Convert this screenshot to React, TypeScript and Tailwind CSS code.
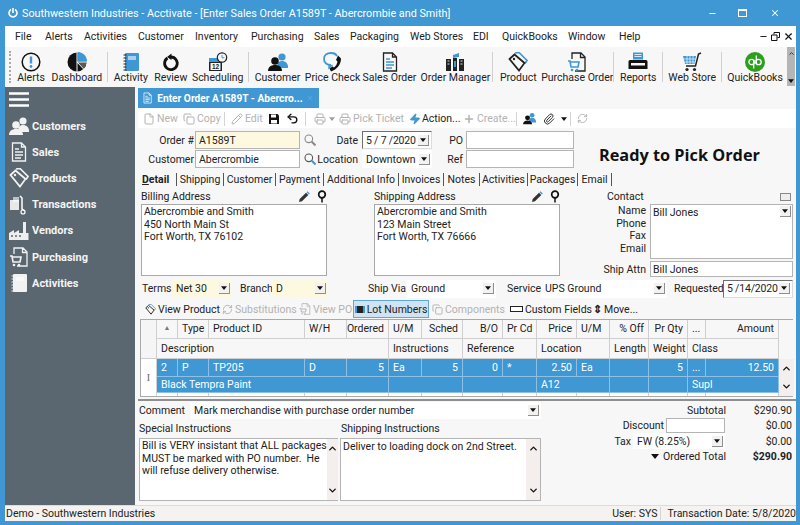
import React from 'react'
import { ChevronDown, ChevronUp, Copy, File, Minus, Paperclip, Pencil, Plus, Printer, RefreshCw, Undo2, X, Zap } from 'lucide-react'

const BLUE = '#3f97d3'

/* ---------- drawn icons ---------- */
type IconProps = { c?: string; a?: string; className?: string }

const People = ({ c = '#111', a = BLUE, className = 'w-5 h-5' }: IconProps) => (
  <svg viewBox="0 0 20 20" className={className}>
    <circle cx="14" cy="5" r="3.6" fill={a} />
    <path d="M9 15c0-4 2-6 5-6s6 2 6 6v1H9z" fill={a} />
    <circle cx="7" cy="9" r="3.8" fill={c} />
    <path d="M0 19c0-4 3-6 7-6s7 2 7 6z" fill={c} />
  </svg>
)
const Doc = ({ c = '#222', a = BLUE, className = 'w-5 h-5' }: IconProps) => (
  <svg viewBox="0 0 20 20" className={className} fill="none">
    <path d="M3.5 1h9l4 4v14h-13z M12.5 1v4h4" stroke={c} strokeWidth="1.3" />
    <path d="M6 7h4M6 10h8M6 13h8M6 16h6" stroke={a} strokeWidth="1.4" />
  </svg>
)
const Tag = ({ c = '#222', a = BLUE, className = 'w-5 h-5' }: IconProps) => (
  <svg viewBox="0 0 20 20" className={className} fill="none">
    <path d="M7 1l4-0.5 8 8-2 3" stroke={a} strokeWidth="1.6" />
    <path d="M1.5 7l5-4.500 10 8.500-5.500 7.500z" stroke={c} strokeWidth="1.7" />
    <circle cx="6" cy="7" r="1.2" fill={c} />
  </svg>
)
const Notebook = ({ c = BLUE, a = '#222', className = 'w-5 h-5' }: IconProps) => (
  <svg viewBox="0 0 20 20" className={className}>
    <rect x="4" y="1" width="14" height="18" rx="1" fill={c} />
    <rect x="7" y="4" width="8" height="4" fill="#fff" fillOpacity=".55" />
    <path d="M2.5 3h3M2.5 6h3M2.5 9h3M2.5 12h3M2.5 15h3M2.5 18h3" stroke={a} strokeWidth="1.2" />
  </svg>
)
const PoDoc = ({ c = '#222', a = BLUE, className = 'w-5 h-5' }: IconProps) => (
  <svg viewBox="0 0 20 20" className={className} fill="none">
    <path d="M5 7V1h9l4 4v14H8 M13.5 1v4.5H18" stroke={c} strokeWidth="1.3" />
    <path d="M1 9h2l1 6h7l1-5H3.5" stroke={a} strokeWidth="1.6" />
    <circle cx="5" cy="18" r="1.3" fill={a} />
    <circle cx="10" cy="18" r="1.3" fill={a} />
  </svg>
)
const Dashboard = () => (
  <svg viewBox="0 0 20 20" className="w-5 h-5">
    <circle cx="10" cy="10" r="9.5" fill="#111" />
    <path d="M10 .5A9.500 9.500 0 0 1 19.500 10H10z" fill={BLUE} transform="translate(.6 -.6)" />
    <path d="M10 10h9.500a9.500 9.500 0 0 1-3 7z" fill="#5a5a5a" />
    <path d="M10 0v20M10 10l7 7.500M10 10h10" stroke="#f8f7f7" strokeWidth="1" />
  </svg>
)
const AlertIcon = () => (
  <svg viewBox="0 0 20 20" className="w-5 h-5">
    <circle cx="10" cy="10" r="8.8" fill="none" stroke="#111" strokeWidth="1.5" />
    <path d="M10 4.500v7" stroke={BLUE} strokeWidth="2.4" />
    <circle cx="10" cy="14.5" r="1.4" fill={BLUE} />
  </svg>
)
const ReviewIcon = () => (
  <svg viewBox="0 0 20 20" className="w-5 h-5" fill="none">
    <path d="M6.500 6a6.300 6.300 0 1 0 3.500-1" stroke="#111" strokeWidth="2.8" />
    <path d="M10.500 1.500L6 5l4.500 3z" fill="#111" />
  </svg>
)
const Scheduling = () => (
  <svg viewBox="0 0 20 20" className="w-5 h-5">
    <rect x="1" y="6" width="13" height="13" fill="#222" />
    <rect x="1" y="6" width="13" height="4" fill={BLUE} />
    <rect x="2.5" y="11" width="10" height="7" fill="#f8f7f7" />
    <text x="7.5" y="17" fontSize="6.5" textAnchor="middle" fontWeight="700" fill="#222" fontFamily="Liberation Sans, sans-serif">12</text>
    <circle cx="14" cy="5.5" r="4.7" fill="#f8f7f7" stroke="#222" strokeWidth="1.2" />
    <path d="M14 3v2.800h2.400" stroke={BLUE} strokeWidth="1" fill="none" />
  </svg>
)
const PriceCheck = () => (
  <svg viewBox="0 0 20 20" className="w-5 h-5" fill="none">
    <path d="M8 13c-4 0-7-2-7-6s3-6 7-6 5 1 6 3" stroke={BLUE} strokeWidth="1.8" />
    <path d="M6 12.500l0 3.500 3.500-3" stroke={BLUE} strokeWidth="1.4" />
    <path d="M15 3.500l3 3c0 6-4 11-10 13l-1.500-3 3-2 1.500 1c2-1.500 3-3.500 3.500-6l-1.500-1.500z" fill="#111" />
  </svg>
)
const OrderManager = () => (
  <svg viewBox="0 0 20 20" className="w-5 h-5">
    <path d="M1 7h5v12H1zM8 6h4v13H8zM14 7h5v12h-5z" fill="#222" />
    <path d="M8 3l6-2v4l-6 1z" fill={BLUE} />
    <path d="M2.500 9h2M2.500 12h2M15.500 9h2M15.500 12h2" stroke="#ddd" strokeWidth="1" />
    <path d="M9 9h2v6H9z" fill={BLUE} />
  </svg>
)
const ReportsIcon = () => (
  <svg viewBox="0 0 20 20" className="w-5 h-5">
    <rect x="5" y="0.5" width="10" height="7" fill={BLUE} />
    <path d="M6.500 2.500h7M6.500 4.500h7" stroke="#fff" strokeWidth=".8" />
    <path d="M2 8h16a1.500 1.500 0 0 1 1.500 1.500V17H.5V9.500A1.500 1.500 0 0 1 2 8z" fill="#111" />
    <rect x="3" y="11" width="14" height="2.5" fill="#f8f7f7" />
  </svg>
)
const WebStore = () => (
  <svg viewBox="0 0 20 20" className="w-5 h-5" fill="none">
    <path d="M1 4h13l-1.500 8H3z" fill={BLUE} />
    <path d="M1 7h13M2 10h11M5 4v8M8 4v8M11 4v8" stroke="#f8f7f7" strokeWidth=".7" />
    <path d="M19 1l-2.500 1-3 12H4" stroke="#222" strokeWidth="1.5" />
    <circle cx="5" cy="17.5" r="1.6" fill="#222" />
    <circle cx="12.5" cy="17.5" r="1.6" fill="#222" />
  </svg>
)
const QuickBooks = () => (
  <svg viewBox="0 0 20 20" className="w-5 h-5" fill="none">
    <circle cx="10" cy="10" r="10" fill="#2ca01c" />
    <circle cx="6.6" cy="10" r="2.7" stroke="#fff" strokeWidth="1.3" />
    <path d="M8.700 8v8.500M11.300 3.500V12" stroke="#fff" strokeWidth="1.3" />
    <circle cx="13.5" cy="10" r="2.7" stroke="#fff" strokeWidth="1.3" />
  </svg>
)
const Transactions = () => (
  <svg viewBox="0 0 20 20" className="w-5 h-5" fill="none">
    <rect x="1" y="5" width="9" height="10" fill="#e8e8e8" />
    <rect x="4" y="2" width="6" height="5" fill="#fff" fillOpacity=".6" />
    <path d="M11 1l2 2v11l3 2" stroke="#fff" strokeWidth="1.5" />
    <circle cx="14" cy="17" r="2" stroke="#fff" strokeWidth="1.2" />
  </svg>
)
const Vendors = () => (
  <svg viewBox="0 0 20 20" className="w-5 h-5">
    <path d="M0 19v-7l5-3v3l5-3v3h4V1h3v11h2.500v7z" fill="#eee" />
    <path d="M2 15h2M6 15h2M10 15h2" stroke="#5b6770" strokeWidth="1.5" />
  </svg>
)
const Hamburger = () => (
  <svg viewBox="0 0 20 15" className="w-5 h-[15px]">
    <path d="M0 1.500h20M0 7.500h20M0 13.500h20" stroke="#fff" strokeWidth="2.4" strokeLinecap="round" />
  </svg>
)
const Magnifier = ({ blue }: { blue?: boolean }) => (
  <svg viewBox="0 0 12 12" className="w-3 h-3" fill="none">
    <circle cx="4.8" cy="4.8" r="3.8" stroke={blue ? '#555' : '#8a8a8a'} strokeWidth="1.1" />
    <path d="M7.800 7.800L11.500 11.500" stroke={blue ? BLUE : '#8a8a8a'} strokeWidth="2" />
  </svg>
)
const Pin = () => (
  <svg viewBox="0 0 10 13" className="w-[10px] h-[13px]" fill="none">
    <circle cx="5" cy="4.5" r="3.3" stroke="#111" strokeWidth="1.7" />
    <path d="M5 8v4.500" stroke="#111" strokeWidth="1.5" />
  </svg>
)
const EditPen = () => (
  <svg viewBox="0 0 12 12" className="w-3 h-3">
    <path d="M1 11l.7-3L8 1.700 10.300 4 4 10.300z" fill="#333" />
    <path d="M8.500 1.200l1-1 2.300 2.300-1 1z" fill={BLUE} />
  </svg>
)
const Floppy = () => (
  <svg viewBox="0 0 12 12" className="w-3 h-3">
    <path d="M1 1h8.500L11 2.500V11H1z" fill="#111" />
    <rect x="3" y="1.5" width="5" height="3" fill="#fff" />
    <rect x="3" y="7" width="6" height="3.500" fill="#fff" />
  </svg>
)
const Arrow = ({ small }: { small?: boolean }) => (
  <svg viewBox="0 0 8 5" className={small ? 'w-[6px] h-[4px]' : 'w-[8px] h-[5px]'}>
    <path d="M0 0h8L4 5z" fill="#111" />
  </svg>
)

/* ---------- form bits ---------- */
function Input({ className = '', children }: { className?: string; children?: React.ReactNode }) {
  return <div className={`h-full border border-[#b4b4b4] pl-[3px] flex items-center truncate ${className}`}>{children}</div>
}

function DropBtn() {
  return (
    <span className="w-[11px] h-[11px] bg-[#f4f2f1] border-r border-b border-[#8f8f8f] flex items-center justify-center shrink-0">
      <Arrow small />
    </span>
  )
}

function Select({ className = '', value, framed }: { className?: string; value: string; framed?: boolean }) {
  return (
    <div
      className={`h-[18px] flex items-center justify-between pr-[2px] whitespace-nowrap ${
        framed
          ? 'pl-[3px] tracking-[-0.2px] border border-t-[#6f6f6f] border-l-[#6f6f6f] border-r-[#dcdcdc] border-b-[#dcdcdc] bg-white'
          : 'pl-[4px]'
      } ${className}`}
    >
      <span>{value}</span>
      <DropBtn />
    </div>
  )
}

function Scroll({ className = '' }: { className?: string }) {
  return (
    <div className={`bg-[#f4efed] flex flex-col items-center justify-between py-[4px] text-[#111] ${className}`}>
      <ChevronUp size={11} strokeWidth={3} />
      <ChevronDown size={11} strokeWidth={3} />
    </div>
  )
}

const MENU = [
  ['File', 'w-[30px]'],
  ['Alerts', 'w-[39px]'],
  ['Activities', 'w-[54px]'],
  ['Customer', 'w-[57px]'],
  ['Inventory', 'w-[56px]'],
  ['Purchasing', 'w-[63px]'],
  ['Sales', 'w-[36px]'],
  ['Packaging', 'w-[60px]'],
  ['Web Stores', 'w-[63px]'],
  ['EDI', 'w-[29px]'],
  ['QuickBooks', 'w-[66px]'],
  ['Window', 'w-[51px]'],
  ['Help', 'w-[40px]'],
]

type Tool = { label: string; w: string; icon: React.ReactNode } | null
const TOOLS: Tool[] = [
  { label: 'Alerts', w: 'w-[34px]', icon: <AlertIcon /> },
  { label: 'Dashboard', w: 'w-[58px]', icon: <Dashboard /> },
  null,
  { label: 'Activity', w: 'w-[44px]', icon: <Notebook /> },
  { label: 'Review', w: 'w-[36px]', icon: <ReviewIcon /> },
  { label: 'Scheduling', w: 'w-[58px]', icon: <Scheduling /> },
  null,
  { label: 'Customer', w: 'w-[56px]', icon: <People /> },
  { label: 'Price Check', w: 'w-[54px]', icon: <PriceCheck /> },
  { label: 'Sales Order', w: 'w-[60px]', icon: <Doc /> },
  { label: 'Order Manager', w: 'w-[72px]', icon: <OrderManager /> },
  null,
  { label: 'Product', w: 'w-[48px]', icon: <Tag /> },
  { label: 'Purchase Order', w: 'w-[70px]', icon: <PoDoc /> },
  null,
  { label: 'Reports', w: 'w-[46px]', icon: <ReportsIcon /> },
  null,
  { label: 'Web Store', w: 'w-[56px]', icon: <WebStore /> },
  null,
  { label: 'QuickBooks', w: 'w-[64px]', icon: <QuickBooks /> },
]

const NAV: [string, React.ReactNode][] = [
  ['Customers', <People c="#f2f2f2" a="#f2f2f2" />],
  ['Sales', <Doc c="#f2f2f2" a="#f2f2f2" />],
  ['Products', <Tag c="#f2f2f2" a="#f2f2f2" />],
  ['Transactions', <Transactions />],
  ['Vendors', <Vendors />],
  ['Purchasing', <PoDoc c="#f2f2f2" a="#f2f2f2" />],
  ['Activities', <Notebook c="#f2f2f2" a="#f2f2f2" />],
]

const SUBTABS = [
  ['Shipping', 'w-[47px]'],
  ['Customer', 'w-[52px]'],
  ['Payment', 'w-[48px]'],
  ['Additional Info', 'w-[75px]'],
  ['Invoices', 'w-[45px]'],
  ['Notes', 'w-[36px]'],
  ['Activities', 'w-[48px]'],
  ['Packages', 'w-[50px]'],
  ['Email', 'w-[34px]'],
]

const CELL = 'border-r border-b border-[#cfcfcf] px-[4px] pb-px flex items-center truncate'
const SEL = 'border-r border-b border-[#8cc0e4] px-[4px] pb-px flex items-center truncate bg-[#3f97d3] text-white'

type C = [string, string?]
const HEAD1: C[] = [
  ['▲', 'justify-center text-[#777] text-[7px]'],
  ['Type'],
  ['Product ID'],
  ['W/H'],
  ['Ordered', 'justify-end'],
  ['U/M'],
  ['Sched', 'justify-end'],
  ['B/O', 'justify-end'],
  ['Pr Cd'],
  ['Price', 'justify-end'],
  ['U/M'],
  ['% Off', 'justify-end'],
  ['Pr Qty', 'justify-end'],
  ['...'],
  ['Amount', 'justify-end'],
]
const HEAD2: C[] = [
  ['Description', 'col-span-5'],
  ['Instructions', 'col-span-2'],
  ['Reference', 'col-span-2'],
  ['Location', 'col-span-2'],
  ['Length'],
  ['Weight'],
  ['Class', 'col-span-2'],
]
const ROW1: C[] = [
  ['2'],
  ['P'],
  ['TP205'],
  ['D'],
  ['5', 'justify-end'],
  ['Ea'],
  ['5', 'justify-end'],
  ['0', 'justify-end'],
  ['*'],
  ['2.50', 'justify-end'],
  ['Ea'],
  [''],
  ['5', 'justify-end'],
  ['...'],
  ['12.50', 'justify-end'],
]
const ROW2: C[] = [
  ['Black Tempra Paint', 'col-span-5'],
  ['', 'col-span-2'],
  ['', 'col-span-2'],
  ['A12', 'col-span-2'],
  [''],
  [''],
  ['Supl', 'col-span-2'],
]

function TB({ icon, label, off, className = '' }: { icon: React.ReactNode; label?: string; off?: boolean; className?: string }) {
  return (
    <span className={`flex items-center gap-[2px] ${off ? 'text-[#b2b2b2]' : 'text-[#222]'} ${className}`}>
      {icon}
      {label}
    </span>
  )
}

const TbSep = ({ className = '' }: { className?: string }) => <span className={`w-px h-[14px] bg-[#d4d4d4] ${className}`} />

export default function App() {
  return (
    <div
      className="w-[800px] h-[525px] overflow-hidden bg-[#3f97d3] flex flex-col text-[10.5px] leading-[13px] text-[#222]"
      style={{ fontFamily: 'Roboto, "Open Sans", sans-serif' }}
    >
      {/* Title bar */}
      <div className="h-[26px] shrink-0 flex items-center pl-[8px] text-white text-[10.8px]">
        <svg viewBox="0 0 10 10" className="w-[10px] h-[10px] mr-[4px]" fill="none">
          <path d="M3 1.500a4 4 0 1 0 4 0M5 0v5" stroke="#fff" strokeWidth="1.6" />
        </svg>
        <span>Southwestern Industries - Acctivate - [Enter Sales Order A1589T - Abercrombie and Smith]</span>
        <div className="ml-auto flex items-center">
          <Minus size={9} strokeWidth={3} className="mr-[21px]" />
          <span className="w-[9px] h-[8px] border border-white border-t-2 mr-[23px]" />
          <X size={10} strokeWidth={2.5} className="mr-[20px]" />
        </div>
      </div>

      <div className="flex-1 min-h-0 ml-[5px] mr-[4px] mb-[4px] flex flex-col bg-[#f8f7f7]">
        {/* Menu */}
        <div className="h-[21px] shrink-0 bg-white flex items-center pl-[10px]">
          {MENU.map(([m, w]) => (
            <span key={m} className={w}>
              {m}
            </span>
          ))}
          <div className="ml-auto flex items-center gap-[3px] pr-[2px]">
            <Minus size={9} strokeWidth={3} />
            <svg viewBox="0 0 9 9" className="w-[9px] h-[9px]" fill="none">
              <path d="M3 2.500V.5h5.500v5H6.500M.5 3h5.500v5.500H.5z" stroke="#111" />
            </svg>
            <X size={11} strokeWidth={2.5} className="text-[#111]" />
          </div>
        </div>

        {/* Toolbar */}
        <div className="h-[39px] shrink-0 flex items-center pl-[4px]">
          <span className="w-[2px] h-[32px] mr-[3px] border-l-2 border-dotted border-[#aaa]" />
          {TOOLS.map((t, i) =>
            t ? (
              <div key={t.label} className={`${t.w} h-full flex flex-col items-center pt-[5px] whitespace-nowrap`}>
                <span className="h-[20px]">{t.icon}</span>
                <span className="mt-[-1px] leading-[13px]">{t.label}</span>
              </div>
            ) : (
              <span key={i} className="w-px h-[30px] bg-[#d0d0d0] mx-[1px]" />
            )
          )}
          <div className="ml-auto w-[8px] h-full bg-[#b5b5b5] flex flex-col items-center justify-between py-[3px] mr-[1px]">
            <ChevronUp size={7} strokeWidth={3} />
            <Arrow small />
          </div>
        </div>

        {/* Body */}
        <div className="flex-1 min-h-0 flex">
          <aside className="w-[130px] mt-px shrink-0 bg-[#5b6770] text-[#f4f4f4] font-bold text-[11px] pl-[4px] pt-[5px]">
            <Hamburger />
            <div className="mt-[6px] flex flex-col">
              {NAV.map(([n, ic]) => (
                <div key={n} className="h-[26.2px] flex items-center gap-[3px]">
                  {ic}
                  <span>{n}</span>
                </div>
              ))}
            </div>
          </aside>

          <main className="ml-[3px] flex-1 min-w-0 flex flex-col">
            {/* Document tab */}
            <div className="mt-[2px] w-[181px] h-[20px] bg-[#3f97d3] text-white font-bold text-[10.2px] flex items-center pl-[4px] gap-[4px]">
              <Doc c="#fff" a="#fff" className="w-[14px] h-[14px]" />
              <span className="whitespace-nowrap">Enter Order A1589T - Abercro...</span>
              <X size={8} className="ml-auto mr-[6px] text-[#7fb6dd]" />
            </div>

            {/* Order toolbar */}
            <div className="mt-px h-[19px] bg-white flex items-center pl-[5px] whitespace-nowrap">
              <TB off icon={<File size={12} />} label="New" className="w-[40px]" />
              <TB off icon={<Copy size={12} />} label="Copy" className="w-[41px]" />
              <TbSep />
              <TB off icon={<Pencil size={12} />} label="Edit" className="ml-[6px] w-[37px]" />
              <Floppy />
              <Undo2 size={13} strokeWidth={2.5} className="ml-[6px] text-[#111]" />
              <TbSep className="ml-[6px]" />
              <Printer size={12} className="ml-[8px] text-[#b2b2b2]" />
              <span className="ml-[3px] opacity-40">
                <Arrow small />
              </span>
              <TB off icon={<Printer size={12} />} label="Pick Ticket" className="ml-[4px] w-[70px]" />
              <TB icon={<Zap size={12} fill={BLUE} className="text-[#3f97d3]" />} label="Action..." className="w-[54px] gap-px" />
              <TB off icon={<Plus size={12} strokeWidth={3} />} label="Create..." className="w-[53px]" />
              <TbSep />
              <People className="w-[13px] h-[13px] ml-[6px]" />
              <Paperclip size={12} className="ml-[7px] text-[#333]" />
              <span className="ml-[6px]">
                <Arrow small />
              </span>
              <TbSep className="ml-[3px]" />
              <RefreshCw size={11} className="ml-[6px] text-[#b2b2b2]" />
            </div>

            {/* Header fields */}
            <div className="mt-[3px] flex items-end">
              <div className="flex flex-col gap-px">
                <div className="h-[18px] flex items-center">
                  <span className="w-[56px] text-right mr-px">Order #</span>
                  <Input className="w-[105px] bg-[#fdf9e1]">A1589T</Input>
                  <span className="w-[16px] pl-[4px]">
                    <Magnifier />
                  </span>
                  <span className="w-[42px] text-right mr-[4px]">Date</span>
                  <Select framed value="5 / 7 /2020" className="w-[70px]" />
                  <span className="w-[31px] text-right mr-[3px]">PO</span>
                  <Input className="w-[108px] bg-white" />
                </div>
                <div className="h-[18px] flex items-center">
                  <span className="w-[56px] text-right mr-px">Customer</span>
                  <Input className="w-[105px] bg-white">Abercrombie</Input>
                  <span className="w-[16px] pl-[4px]">
                    <Magnifier blue />
                  </span>
                  <span className="w-[42px] text-right mr-[4px]">Location</span>
                  <Select value="Downtown" className="w-[70px] bg-white" />
                  <span className="w-[31px] text-right mr-[3px]">Ref</span>
                  <Input className="w-[108px] bg-white" />
                </div>
              </div>
              <span className="ml-[25px] mb-[2px] font-bold text-[16.3px] leading-[22px] text-[#111] whitespace-nowrap font-['Open_Sans',sans-serif]">
                Ready to Pick Order
              </span>
            </div>

            {/* Sub tabs */}
            <div className="mt-[3px] h-[16px] flex items-center pl-[4px] whitespace-nowrap">
              <span className="w-[35px] font-bold border-r border-[#555]">
                <span className="underline">D</span>etail
              </span>
              {SUBTABS.map(([t, w]) => (
                <span key={t} className={`${w} text-center border-r border-[#555]`}>
                  {t}
                </span>
              ))}
            </div>

            {/* Addresses */}
            <div className="mt-[2px] flex h-[89px]">
              <div className="w-[189px] ml-[3px] flex flex-col">
                <div className="h-[15px] flex items-center">
                  <span>Billing Address</span>
                  <span className="ml-auto flex items-center gap-[7px] pr-[3px]">
                    <EditPen />
                    <Pin />
                  </span>
                </div>
                <div className="w-[186px] h-[72px] border border-[#a9a9a9] bg-white px-[2px] pt-[1px] leading-[12.5px]">
                  Abercrombie and Smith
                  <br />
                  450 North Main St
                  <br />
                  Fort Worth, TX 76102
                </div>
              </div>
              <div className="w-[189px] ml-[44px] flex flex-col">
                <div className="h-[15px] flex items-center">
                  <span>Shipping Address</span>
                  <span className="ml-auto flex items-center gap-[7px] pr-[3px]">
                    <EditPen />
                    <Pin />
                  </span>
                </div>
                <div className="w-[186px] h-[72px] border border-[#a9a9a9] bg-white px-[2px] pt-[1px] leading-[12.5px]">
                  Abercrombie and Smith
                  <br />
                  123 Main Street
                  <br />
                  Fort Worth, TX 76666
                </div>
              </div>
              <div className="w-[186px] ml-[44px] flex flex-col">
                <div className="h-[15px] flex items-center">
                  <span>Contact</span>
                  <span className="ml-auto mr-[2px] w-[11px] h-[8px] border border-[#888] bg-[#eee]" />
                </div>
                <div className="flex">
                  <div className="w-[39px] mr-[4px] text-right leading-[12.5px] pt-[1px]">
                    Name
                    <br />
                    Phone
                    <br />
                    Fax
                    <br />
                    Email
                  </div>
                  <div className="w-[143px] h-[55px] border border-[#b4b4b4] bg-white flex justify-between pl-[2px] pr-[1px] pt-px">
                    <span>Bill Jones</span>
                    <DropBtn />
                  </div>
                </div>
                <div className="mt-[2px] h-[16px] flex items-center">
                  <span className="w-[39px] mr-[4px] flex justify-end whitespace-nowrap">Ship Attn</span>
                  <Input className="w-[143px] bg-white !pl-[2px]">Bill Jones</Input>
                </div>
              </div>
            </div>

            {/* Terms row */}
            <div className="mt-px h-[19px] flex items-center whitespace-nowrap">
              <span className="ml-[4px] w-[30px]">Terms</span>
              <Select value="Net 30" className="w-[60px] bg-[#fdf9e1]" />
              <span className="ml-[8px] w-[32px]">Branch</span>
              <Select value="D" className="w-[56px] bg-[#fdf9e1]" />
              <span className="ml-[40px] w-[39px]">Ship Via</span>
              <Select value="Ground" className="w-[89px] bg-white" />
              <span className="ml-[11px] w-[34px]">Service</span>
              <Select value="UPS Ground" className="w-[126px] bg-white" />
              <span className="ml-[7px] w-[49px]">Requested</span>
              <Select framed value="5 /14/2020" className="w-[70px]" />
            </div>

            {/* Line actions */}
            <div className="mt-[2px] h-[18px] flex items-center whitespace-nowrap">
              <TB icon={<Tag className="w-[11px] h-[11px]" />} label="View Product" className="ml-[7px] w-[77px]" />
              <TB off icon={<RefreshCw size={11} />} label="Substitutions" className="w-[77px]" />
              <TB off icon={<PoDoc c="#b2b2b2" a="#b2b2b2" className="w-[12px] h-[12px]" />} label="View PO" className="w-[54px]" />
              <span className="w-[76px] h-[18px] border border-[#5ea7d8] bg-[#cfe3f2] flex items-center justify-center gap-[2px]">
                <span className="w-[10px] h-[7px] bg-[#222] border-x-2 border-[#3f97d3]" />
                Lot Numbers
              </span>
              <TB off icon={<Copy size={11} />} label="Components" className="ml-[3px] w-[78px]" />
              <TB icon={<span className="w-[13px] h-[6px] border border-[#222] bg-white" />} label="Custom Fields" className="w-[83px]" />
              <TB icon={<span className="font-bold text-[11px] leading-[11px]">⇕</span>} label="Move..." />
            </div>

            {/* Line grid */}
            <div className="mt-px ml-[2px] w-[653px] grid grid-cols-[16px_21px_31px_96px_42px_42px_33px_41px_40px_34px_40px_33px_39px_39px_18px_73px_15px] grid-rows-[19px_20px_18px_16px_3px] border-y border-l border-[#a9a9a9] whitespace-nowrap">
              <div className="row-span-2 bg-[#f6f5f5] border-r border-b border-[#cfcfcf]" />
              {HEAD1.map(([t, c], i) => (
                <div key={i} className={`${CELL} bg-[#f8f7f7] ${c ?? ''}`}>
                  {t}
                </div>
              ))}
              <div className="row-span-2" />
              {HEAD2.map(([t, c], i) => (
                <div key={i} className={`${CELL} bg-[#f8f7f7] ${c ?? ''}`}>
                  {t}
                </div>
              ))}
              <div className="row-span-3 bg-white border-r border-[#cfcfcf] flex items-center justify-center text-[#666] text-[10px] font-['Liberation_Serif',serif]">
                I
              </div>
              {ROW1.map(([t, c], i) => (
                <div key={i} className={`${SEL} ${c ?? ''}`}>
                  {t}
                </div>
              ))}
              <Scroll className="row-span-3" />
              {ROW2.map(([t, c], i) => (
                <div key={i} className={`${SEL} ${c ?? ''}`}>
                  {t}
                </div>
              ))}
              {HEAD1.map((_, i) => (
                <div key={i} className="border-r border-[#cfcfcf] bg-white" />
              ))}
            </div>

            {/* Bottom panel */}
            <div className="mt-[2px] flex-1 min-h-0 border-t-2 border-[#8f8f8f] flex">
              <div className="w-[403px] shrink-0 pl-px">
                <div className="mt-px h-[17px] flex items-center">
                  <span className="w-[51px]">Comment</span>
                  <Select value="Mark merchandise with purchase order number" className="w-[351px] bg-white !h-[17px]" />
                </div>
                <div className="mt-[3px] h-[15px] flex">
                  <span className="w-[202px]">Special Instructions</span>
                  <span>Shipping Instructions</span>
                </div>
                <div className="mt-px flex gap-[2px]">
                  <div className="w-[199px] h-[63px] border border-[#b4b4b4] bg-white flex">
                    <div className="flex-1 pl-[2px] pt-px leading-[12.5px] whitespace-nowrap">
                      Bill is VERY insistant that ALL packages
                      <br />
                      MUST be marked with PO number.&nbsp; He
                      <br />
                      will refuse delivery otherwise.
                    </div>
                    <Scroll className="w-[14px]" />
                  </div>
                  <div className="w-[201px] h-[63px] border border-[#b4b4b4] bg-white flex">
                    <div className="flex-1 pl-[2px] pt-px whitespace-nowrap">Deliver to loading dock on 2nd Street.</div>
                    <Scroll className="w-[14px]" />
                  </div>
                </div>
              </div>
              <div className="flex-1 pt-[2px] pr-[4px] flex flex-col whitespace-nowrap">
                <div className="h-[14px] flex items-center justify-end">
                  <span>Subtotal</span>
                  <span className="w-[66px] text-right">$290.90</span>
                </div>
                <div className="h-[16px] flex items-center justify-end">
                  <span className="mr-[2px]">Discount</span>
                  <span className="w-[59px] h-[15px] border border-[#b4b4b4] bg-white" />
                  <span className="w-[67px] text-right">$0.00</span>
                </div>
                <div className="h-[16px] flex items-center justify-end">
                  <span className="mr-[2px]">Tax</span>
                  <Select value="FW (8.25%)" className="w-[92px] !h-[16px] bg-white" />
                  <span className="w-[67px] text-right">$0.00</span>
                </div>
                <div className="h-[14px] flex items-center justify-end">
                  <Arrow />
                  <span className="ml-[4px]">Ordered Total</span>
                  <span className="w-[66px] text-right font-bold">$290.90</span>
                </div>
              </div>
            </div>
          </main>
        </div>

        {/* Status bar */}
        <div className="h-[16px] shrink-0 bg-[#f5f2f0] border-t border-[#dcdcdc] flex items-center pl-[1px] whitespace-nowrap">
          <span>Demo - Southwestern Industries</span>
          <span className="ml-auto pr-[3px]">User: SYS</span>
          <span className="pl-[6px] border-l border-[#d4d4d4]">Transaction Date: 5/8/2020</span>
        </div>
      </div>
    </div>
  )
}
